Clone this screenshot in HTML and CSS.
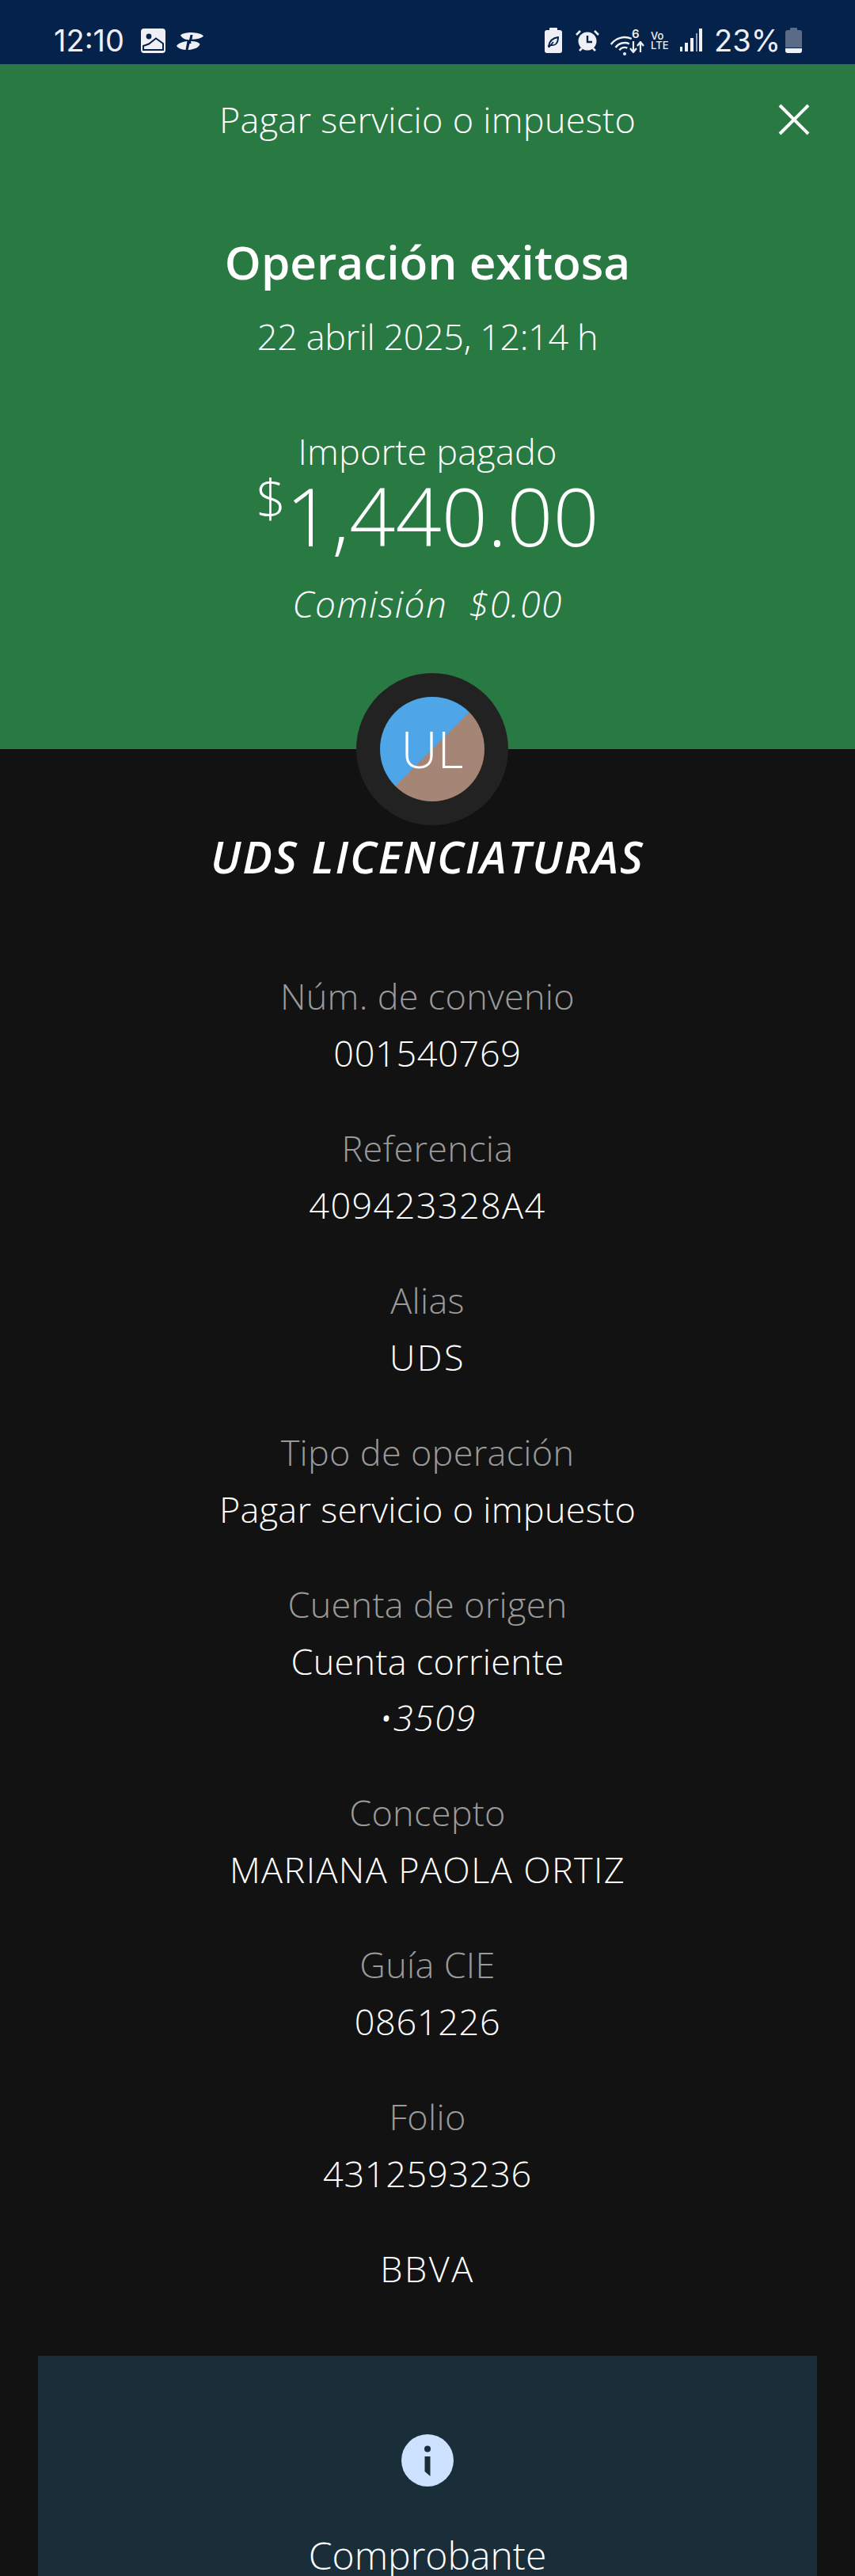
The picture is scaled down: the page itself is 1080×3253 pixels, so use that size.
FILE: index.html
```html
<!DOCTYPE html>
<html lang="es">
<head>
<meta charset="UTF-8">
<meta name="viewport" content="width=device-width, initial-scale=1.0">
<title>Operación exitosa</title>
<link rel="stylesheet" href="styles.css">
</head>
<body>

<div class="page">
  <!-- Status bar -->
  <div class="status-bar">
    <span class="status-time">12:10</span>
    <svg class="icon-gallery" width="31" height="31" viewBox="0 0 31 31">
      <rect width="31" height="31" rx="4" fill="#eef0f5"/>
      <circle cx="10" cy="10" r="3.4" fill="#05224a"/>
      <path d="M3 27v-5l7-2.5 9-7 9 6.5v8z" fill="none" stroke="#05224a" stroke-width="2"/>
    </svg>
    <svg class="icon-notif" width="34" height="22" viewBox="0 0 34 22">
      <path d="M5 3.5C8 .8 14 0 17.5 0 23 0 31 1 34 4.500 31 7.600 25 8.500 19.500 8.800L20.500 3H17.500L16 9.500C12 9 8 8.500 5 3.500z" fill="#eef0f5"/>
      <path d="M0 17C2 13.500 8 11.500 13.500 11L11.500 22C6 21.800 2 20 0 17zM18 11C22 11 27 11.500 29.500 14.500 29 18 24 21.500 14.500 22L16.500 14H18.500z" fill="#eef0f5"/>
    </svg>
    <div class="status-spacer"></div>
    <svg class="icon-saver" width="22" height="32" viewBox="0 0 22 32">
      <path d="M7 0h8a1 1 0 0 1 1 1v2h3a3 3 0 0 1 3 3v23a3 3 0 0 1-3 3H3a3 3 0 0 1-3-3V6a3 3 0 0 1 3-3h3V1a1 1 0 0 1 1-1z" fill="#eef0f5"/>
      <path d="M5 23c1-6 5-10 12-11 0 7-3 11-9 10zM5 25l6-7" fill="none" stroke="#05224a" stroke-width="1.800"/>
    </svg>
    <svg class="icon-alarm" width="30" height="28" viewBox="0 0 30 28">
      <circle cx="15" cy="15" r="11.500" fill="#eef0f5"/>
      <path d="M15 8v8h6" fill="none" stroke="#05224a" stroke-width="2.400"/>
      <path d="M1 7l5-5M29 7l-5-5M5 27l3-3M25 27l-3-3" stroke="#eef0f5" stroke-width="2.600" fill="none"/>
    </svg>
    <div class="wifi">
      <svg width="27" height="28" viewBox="0 0 27 28">
        <path d="M.8 12A21 21 0 0 1 26.800 5M6.500 16A14 14 0 0 1 23.900 11.300M11.400 19.400A8 8 0 0 1 21.400 16.700" fill="none" stroke="#eef0f5" stroke-width="2.400"/>
        <circle cx="18" cy="24" r="2" fill="#eef0f5"/>
      </svg>
      <span class="wifi-six">6</span>
      <svg class="wifi-arrows" width="19" height="15" viewBox="0 0 19 15">
        <path d="M5 0v13M1 9l4 5 4-5M14 14V2M10 6l4-5 4 5" fill="none" stroke="#eef0f5" stroke-width="2.200"/>
      </svg>
    </div>
    <div class="volte"><span>Vo</span><span>LTE</span></div>
    <svg class="icon-signal" width="28" height="29" viewBox="0 0 28 29">
      <rect x="0" y="23" width="3" height="6" fill="#eef0f5"/>
      <rect x="6" y="18" width="4" height="11" fill="#eef0f5"/>
      <rect x="13" y="12" width="4" height="17" fill="#eef0f5"/>
      <rect x="20" y="6" width="2" height="23" fill="#8f9db3"/>
      <rect x="24" y="0" width="4" height="29" fill="#eef0f5"/>
    </svg>
    <span class="status-pct">23%</span>
    <svg class="icon-battery" width="21" height="32" viewBox="0 0 21 32">
      <path d="M7 0h7a1 1 0 0 1 1 1v2h3a3 3 0 0 1 3 3v19H0V6a3 3 0 0 1 3-3h3V1a1 1 0 0 1 1-1z" fill="#5a6b88"/>
      <path d="M0 26h21v3a3 3 0 0 1-3 3H3a3 3 0 0 1-3-3z" fill="#eef0f5"/>
    </svg>
  </div>

  <!-- Green summary -->
  <div class="summary">
    <div class="top-bar">
      <span class="top-title">Pagar servicio o impuesto</span>
      <svg class="close-icon" width="40" height="40" viewBox="0 0 40 40">
        <path d="M2 2l36 36M38 2L2 38" stroke="#fff" stroke-width="4" fill="none"/>
      </svg>
    </div>
    <h1>Operación exitosa</h1>
    <p class="date">22 abril 2025, 12:14 h</p>
    <p class="paid-label">Importe pagado</p>
    <p class="amount"><span class="currency">$</span>1,440.00</p>
    <p class="fee">Comisión&nbsp; $0.00</p>
  </div>

  <div class="avatar-row">
    <div class="avatar-ring">
      <div class="avatar">UL</div>
    </div>
  </div>

  <h2 class="payee">UDS LICENCIATURAS</h2>

  <!-- Details -->
  <div class="details">
    <div class="detail">
      <div class="detail-label">Núm. de convenio</div>
      <div class="detail-value num">001540769</div>
    </div>
    <div class="detail">
      <div class="detail-label">Referencia</div>
      <div class="detail-value wide">409423328A4</div>
    </div>
    <div class="detail">
      <div class="detail-label">Alias</div>
      <div class="detail-value extra-wide">UDS</div>
    </div>
    <div class="detail">
      <div class="detail-label">Tipo de operación</div>
      <div class="detail-value">Pagar servicio o impuesto</div>
    </div>
    <div class="detail">
      <div class="detail-label">Cuenta de origen</div>
      <div class="detail-value">Cuenta corriente</div>
      <div class="detail-value detail-italic wide">•3509</div>
    </div>
    <div class="detail">
      <div class="detail-label">Concepto</div>
      <div class="detail-value wide">MARIANA PAOLA ORTIZ</div>
    </div>
    <div class="detail">
      <div class="detail-label">Guía CIE</div>
      <div class="detail-value num">0861226</div>
    </div>
    <div class="detail">
      <div class="detail-label">Folio</div>
      <div class="detail-value num">4312593236</div>
    </div>
    <div class="detail-value bank extra-wide">BBVA</div>
  </div>

  <!-- Receipt card -->
  <div class="receipt">
    <svg class="info-icon" width="66" height="66" viewBox="0 0 66 66">
      <circle cx="33" cy="33" r="33" fill="#cce2ff"/>
      <circle cx="33" cy="18.500" r="4" fill="#1a2e3a"/>
      <path d="M29.500 28h7v25l-7-6z" fill="#1a2e3a"/>
    </svg>
    <div class="receipt-title">Comprobante</div>
  </div>
</div>

</body>
</html>
```

FILE: styles.css
```css
html, body {
  margin: 0;
  padding: 0;
  background-color: #121212;
}
body {
  font-family: "Open Sans", "Liberation Sans", sans-serif;
  font-weight: 300;
  color: #fff;
}
.page {
  width: 1080px;
  height: 3253px;
  overflow: hidden;
}

/* status bar */
.status-bar {
  height: 81px;
  background-color: #05224a;
  color: #eef0f5;
  display: flex;
  align-items: center;
  padding: 0 67px 0 68px;
  box-sizing: border-box;
  font-family: Inter, sans-serif;
  font-weight: 400;
  font-size: 38px;
}
.status-time {
  width: 92px;
  margin-top: 20px;
  line-height: 40px;
  white-space: nowrap;
}
.icon-gallery {
  margin: 22px 0 0 18px;
}
.icon-notif {
  margin: 22px 0 0 14px;
}
.status-spacer {
  flex: 1;
}
.icon-saver {
  margin-top: 20px;
}
.icon-alarm {
  margin: 20px 0 0 17px;
}
.wifi {
  position: relative;
  width: 43px;
  height: 32px;
  margin: 20px 0 0 14px;
}
.wifi-six {
  position: absolute;
  left: 27px;
  top: 0;
  font-size: 15px;
  line-height: 15px;
  font-weight: 600;
}
.wifi-arrows {
  position: absolute;
  left: 24px;
  top: 17px;
}
.volte {
  display: flex;
  flex-direction: column;
  width: 25px;
  margin: 20px 0 0 8px;
  font-size: 13px;
  line-height: 12px;
  font-weight: 500;
}
.icon-signal {
  margin: 20px 0 0 12px;
}
.status-pct {
  margin: 20px 0 0 15px;
  line-height: 40px;
}
.icon-battery {
  margin: 20px 0 0 6px;
}

/* green block */
.summary {
  height: 865px;
  background-color: #287a42;
  text-align: center;
  overflow: hidden;
}
.top-bar {
  position: relative;
  height: 70px;
  margin-top: 35px;
}
.top-title {
  font-size: 45px;
  letter-spacing: 0.3px;
  line-height: 70px;
}
.close-icon {
  position: absolute;
  left: 983px;
  top: 15px;
}
h1 {
  margin: 104px 0 0;
  font-size: 58.500px;
  line-height: 80px;
  font-weight: 600;
}
.date {
  margin: 25px 0 0;
  font-size: 45px;
  letter-spacing: -0.4px;
  line-height: 60px;
}
.paid-label {
  margin: 89px 0 0;
  font-size: 45px;
  letter-spacing: 0.2px;
  line-height: 52px;
}
.amount {
  margin: 0;
  font-size: 102px;
  line-height: 110px;
}
.currency {
  font-size: 66px;
  vertical-align: 36px;
  line-height: 0;
}
.fee {
  margin: 26px 0 0;
  font-size: 46px;
  font-style: italic;
  letter-spacing: 1.4px;
  line-height: 60px;
}

/* avatar over the block edge */
.avatar-row {
  height: 97px;
  position: relative;
}
.avatar-ring {
  position: absolute;
  left: 450px;
  top: -96px;
  width: 192px;
  height: 192px;
  border-radius: 50%;
  background-color: #222222;
  display: flex;
  align-items: center;
  justify-content: center;
}
.avatar {
  width: 132px;
  height: 132px;
  border-radius: 50%;
  background: linear-gradient(135deg, #4ea5e8 50%, #a58575 50%);
  text-align: center;
  font-size: 64px;
  line-height: 132px;
}
.payee {
  margin: -2px 0 0;
  text-align: center;
  font-size: 56px;
  letter-spacing: 2px;
  line-height: 80px;
  font-weight: 600;
  font-style: italic;
}

/* details */
.details {
  margin-top: 101px;
  text-align: center;
  font-size: 45px;
}
.detail {
  margin-bottom: 49px;
}
.detail-label {
  line-height: 72px;
  color: #9a9a9a;
  letter-spacing: 0.3px;
}
.detail-value {
  line-height: 71px;
  letter-spacing: 0.3px;
}
.detail-value.num {
  letter-spacing: 0.7px;
}
.detail-value.wide {
  letter-spacing: 1.400px;
}
.detail-value.extra-wide {
  letter-spacing: 2.500px;
}
.detail-italic {
  font-style: italic;
}
.bank {
  margin-top: 1px;
}

/* receipt */
.receipt {
  margin: 75px 48px 0;
  height: 400px;
  background-color: #1a2e3a;
  text-align: center;
  padding-top: 99px;
  box-sizing: border-box;
}
.info-icon {
  display: block;
  margin: 0 auto;
}
.receipt-title {
  margin-top: 57px;
  font-size: 48px;
  line-height: 60px;
}
```
